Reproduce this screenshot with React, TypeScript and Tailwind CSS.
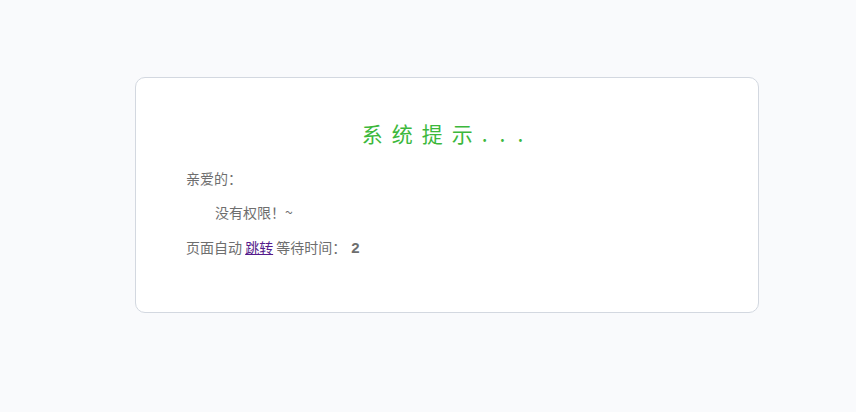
export default function App() {
  return (
    <div className="min-h-[412px] w-full bg-[#f9fafc] pt-[77px] pl-[135px]" style={{ fontFamily: '"Noto Sans CJK SC", "Liberation Sans", sans-serif' }}>
      <div className="w-[624px] h-[236px] rounded-[10px] border border-[#d3d8e0] bg-white pl-[50px] pt-[40px]">
        <div className="pr-[47px] text-center text-[21px] leading-[30px] tracking-[9px] text-[#3cb83c]">
          系统提示<span className="tracking-[12px]">...</span>
        </div>
        <div className="mt-[20px] text-[14px] leading-[20px] text-[#6e6e6e]">亲爱的：</div>
        <div className="mt-[14px] pl-[29px] text-[14px] leading-[20px] text-[#6e6e6e]">没有权限！~</div>
        <div className="mt-[15px] text-[14px] leading-[20px] text-[#6e6e6e]">
          页面自动 <a href="#" className="text-[#551a8b] underline">跳转</a> 等待时间：<span className="ml-[5px] text-[15px] font-bold" style={{ fontFamily: '"Liberation Sans", sans-serif' }}>2</span>
        </div>
      </div>
    </div>
  );
}
